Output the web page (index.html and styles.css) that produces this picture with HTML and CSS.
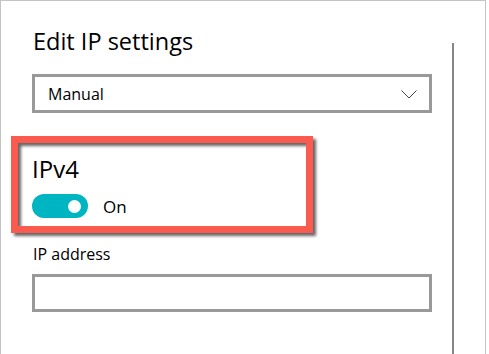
FILE: index.html
```html
<!DOCTYPE html>
<html lang="en">
<head>
    <meta charset="UTF-8">
    <meta name="viewport" content="width=device-width, initial-scale=1.0">
    <title>Edit IP settings</title>
    <link rel="stylesheet" href="styles.css">
</head>
<body>

    <!-- Dialog -->
    <div class="dialog">
        <div class="content">
            <h1 class="title">Edit IP settings</h1>

            <div class="select">
                <span>Manual</span>
                <svg class="chevron" width="16" height="9" viewBox="0 0 16 9">
                    <path d="M0.5 0.5 L8 8 L15.5 0.5" fill="none" stroke="#444" stroke-width="1"/>
                </svg>
            </div>

            <!-- highlighted section -->
            <div class="section">
                <h2>IPv4</h2>
                <div class="toggle-row">
                    <div class="toggle"><div class="knob"></div></div>
                    <span>On</span>
                </div>
            </div>

            <label class="field-label" for="ip">IP address</label>
            <input class="field" id="ip" type="text">
        </div>
        <div class="scrollbar"></div>
    </div>

</body>
</html>
```

FILE: styles.css
```css
/* Page */
body {
    margin: 0;
    background: #fff;
    font-family: "Open Sans", "Noto Sans", Arial, sans-serif;
    color: #000;
    overflow: hidden;
}

.dialog {
    display: flex;
    width: 486px;
    height: 354px;
    box-sizing: border-box;
    border: 1px solid #c4c4c4;
    border-bottom: none;
}

.content {
    width: 420px;
    padding-left: 31px;
}

.scrollbar {
    width: 2px;
    background: #868686;
    margin-top: 42px;
}

/* Title */
.title {
    font-size: 23.5px;
    font-weight: 400;
    margin: 25px 0 0 1px;
    line-height: 30px;
}

/* Dropdown */
.select {
    display: flex;
    justify-content: space-between;
    align-items: center;
    width: 400px;
    height: 39px;
    box-sizing: border-box;
    border: 3px solid #999;
    margin-top: 18px;
    padding: 0 12px 0 13px;
    font-size: 16px;
}

.chevron {
    margin-top: 2px;
}

/* Highlighted section */
.section {
    position: relative;
    margin-top: 30px;
    padding-bottom: 10px;
}

.section::before {
    content: "";
    position: absolute;
    left: -21px;
    top: -7px;
    width: 302px;
    height: 97px;
    box-sizing: border-box;
    border: 7px solid #fb5a4f;
    filter: drop-shadow(3px 3px 1.5px rgba(0, 0, 0, 0.6));
}

.section h2 {
    font-size: 24px;
    font-weight: 400;
    margin: 0;
    line-height: 32px;
    padding-top: 10px;
}

.toggle-row {
    display: flex;
    align-items: center;
    margin-top: 9px;
    font-size: 17px;
}

.toggle {
    width: 56px;
    height: 24px;
    border-radius: 12px;
    background: #00b5c2;
    display: flex;
    align-items: center;
    justify-content: flex-end;
    padding-right: 7px;
    box-sizing: border-box;
    margin-right: 15px;
}

.knob {
    width: 13px;
    height: 13px;
    border-radius: 50%;
    background: #fff;
}

/* IP address field */
.field-label {
    display: block;
    font-size: 16px;
    margin-top: 15px;
    margin-left: 1px;
}

.field {
    display: block;
    width: 400px;
    height: 38px;
    box-sizing: border-box;
    border: 3px solid #999;
    margin-top: 9px;
    font-size: 16px;
    outline: none;
}
```
